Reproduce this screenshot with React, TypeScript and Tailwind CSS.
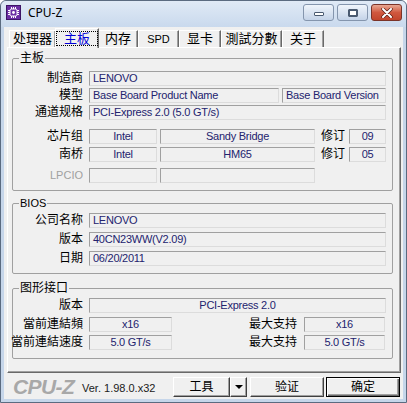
import type { ReactNode } from 'react';

const tabs = [
  { label: '处理器', w: 'w-[47px]' },
  { label: '主板', w: 'w-[44px]', active: true },
  { label: '内存', w: 'w-[40px]' },
  { label: 'SPD', w: 'w-[41px]' },
  { label: '显卡', w: 'w-[42px]' },
  { label: '測試分數', w: 'w-[61px]' },
  { label: '关于', w: 'w-[42px]' },
];

export default function App() {
  return (
    <div className="w-[407px] h-[403px] flex flex-col overflow-hidden rounded-t-[6px] border border-[#5b6b80] bg-[#c6d6ea] font-['Liberation_Sans','Noto_Sans_CJK_SC',sans-serif] text-black">
      <TitleBar />

      {/* client area */}
      <div className="mx-[3px] mb-[3px] flex-1 flex flex-col bg-[#f0f0f0]">
        {/* tabs */}
        <div className="mt-[1px] ml-[5px] h-[19px] flex items-end">
          {tabs.map((t) => (
            <div
              key={t.label}
              className={
                t.active
                  ? `${t.w} relative z-10 -mb-[1px] -mx-[1px] h-[20px] flex items-start justify-center pt-[2px] bg-[#f0f0f0] border-t border-l border-white border-r-[#696969] border-r shadow-[inset_-1px_0_0_#a0a0a0]`
                  : `${t.w} h-[17px] flex items-center justify-center border-t border-l border-white border-r border-r-[#696969] shadow-[inset_-1px_0_0_#a0a0a0]`
              }
            >
              {t.active ? (
                <span className="px-[7px] h-[15px] flex items-center border border-dotted border-black text-[13px] leading-[14px] text-[#0000d8]">
                  {t.label}
                </span>
              ) : (
                <span
                  className={
                    t.label === 'SPD'
                      ? 'text-[11px] leading-[14px]'
                      : 'text-[13px] leading-[14px]'
                  }
                >
                  {t.label}
                </span>
              )}
            </div>
          ))}
        </div>

        {/* tab panel */}
        <div className="ml-[3px] w-[394px] h-[326px] border border-t-white border-l-white border-b-[#696969] border-r-[#696969] shadow-[inset_-1px_-1px_0_#a0a0a0]">
          <Group title="主板" className="mt-[2px]">
            <div className="pt-[5px] pb-[7px]">
              <Row label="制造商">
                <Field className="w-[297px]">LENOVO</Field>
              </Row>
              <Row label="模型" className="mt-[2px]">
                <Field className="w-[190px]">Base Board Product Name</Field>
                <Field className="ml-[3px] w-[104px]">Base Board Version</Field>
              </Row>
              <Row label="通道规格" className="mt-[2px]">
                <Field className="w-[297px]">PCI-Express 2.0 (5.0 GT/s)</Field>
              </Row>
              <Row label="芯片组" className="mt-[9px]">
                <Field center className="w-[68px]">Intel</Field>
                <Field center className="ml-[3px] w-[155px]">Sandy Bridge</Field>
                <span className="ml-[6px] w-[24px] text-[12px] leading-[15px] whitespace-nowrap">修订</span>
                <Field center className="ml-[4px] w-[37px]">09</Field>
              </Row>
              <Row label="南桥" className="mt-[3px]">
                <Field center className="w-[68px]">Intel</Field>
                <Field center className="ml-[3px] w-[155px]">HM65</Field>
                <span className="ml-[6px] w-[24px] text-[12px] leading-[15px] whitespace-nowrap">修订</span>
                <Field center className="ml-[4px] w-[37px]">05</Field>
              </Row>
              <Row label="LPCIO" muted className="mt-[6px]">
                <Field className="w-[68px]" />
                <Field className="ml-[3px] w-[155px]" />
              </Row>
            </div>
          </Group>

          <Group title="BIOS" className="mt-[4px]" latinTitle>
            <div className="pt-[2px] pb-[7px]">
              <Row label="公司名称">
                <Field className="w-[297px]">LENOVO</Field>
              </Row>
              <Row label="版本" className="mt-[4px]">
                <Field className="w-[297px]">40CN23WW(V2.09)</Field>
              </Row>
              <Row label="日期" className="mt-[4px]">
                <Field className="w-[297px]">06/20/2011</Field>
              </Row>
            </div>
          </Group>

          <Group title="图形接口" className="mt-[6px]">
            <div className="pt-[2px] pb-[8px]">
              <Row label="版本">
                <Field center className="w-[297px]">PCI-Express 2.0</Field>
              </Row>
              <Row label="當前連結頻" className="mt-[4px]">
                <Field center className="w-[83px]">x16</Field>
                <span className="ml-auto text-[12px] leading-[15px] whitespace-nowrap">最大支持</span>
                <Field center className="ml-[7px] mr-[7px] w-[81px]">x16</Field>
              </Row>
              <Row label="當前連結速度" className="mt-[3px]">
                <Field center className="w-[83px]">5.0 GT/s</Field>
                <span className="ml-auto text-[12px] leading-[15px] whitespace-nowrap">最大支持</span>
                <Field center className="ml-[7px] mr-[7px] w-[81px]">5.0 GT/s</Field>
              </Row>
            </div>
          </Group>
        </div>

        {/* bottom bar */}
        <div className="flex-1 flex items-center pl-[9px] pr-[3px] pt-[1px]">
          <span className="w-[63px] text-[21px] leading-[22px] font-bold italic text-[#a8a8a8] tracking-[-0.6px]">
            CPU-Z
          </span>
          <span className="ml-[6px] text-[11px] leading-[13px] text-[#202020] pt-[3px]">Ver. 1.98.0.x32</span>
          <div className="ml-auto flex items-center">
            <div className="flex">
              <Button className="w-[57px]">工具</Button>
              <Button className="w-[17px]">
                <span className="block w-0 h-0 border-l-[4px] border-r-[4px] border-t-[4px] border-l-transparent border-r-transparent border-t-black" />
              </Button>
            </div>
            <Button className="ml-[3px] w-[74px]">验证</Button>
            <Button primary className="ml-[2px] w-[74px]">确定</Button>
          </div>
        </div>
      </div>
    </div>
  );
}

function TitleBar() {
  return (
    <div className="h-[26px] flex items-start bg-gradient-to-b from-[#e0eaf6] to-[#c9d9ed] rounded-t-[5px]">
      <div className="ml-[5px] mt-[4px]">
        <svg width="15" height="15" viewBox="0 0 15 15">
          <rect x="0.5" y="0.5" width="14" height="14" fill="#6b2ea3" stroke="#3d1566" />
          <g stroke="#fff" strokeWidth="1">
            <line x1="5.5" y1="2" x2="5.5" y2="4" />
            <line x1="7.5" y1="2" x2="7.5" y2="4" />
            <line x1="9.5" y1="2" x2="9.5" y2="4" />
            <line x1="5.5" y1="11" x2="5.5" y2="13" />
            <line x1="7.5" y1="11" x2="7.5" y2="13" />
            <line x1="9.5" y1="11" x2="9.5" y2="13" />
            <line x1="2" y1="5.5" x2="4" y2="5.5" />
            <line x1="2" y1="7.5" x2="4" y2="7.5" />
            <line x1="2" y1="9.5" x2="4" y2="9.5" />
            <line x1="11" y1="5.5" x2="13" y2="5.5" />
            <line x1="11" y1="7.5" x2="13" y2="7.5" />
            <line x1="11" y1="9.5" x2="13" y2="9.5" />
          </g>
          <rect x="4" y="4" width="7" height="7" rx="1.5" fill="none" stroke="#fff" />
          <circle cx="7.5" cy="7.5" r="1.4" fill="#fff" />
        </svg>
      </div>
      <span className="ml-[7px] mt-[4px] text-[12px] leading-[16px] font-['Noto_Sans',sans-serif] text-black">
        CPU-Z
      </span>
      <div className="ml-auto mr-[4px] mt-[3px] flex">
        <div className="w-[31px] h-[17px] flex items-end justify-center pb-[4px] rounded-[3px] border border-[#8495ad] bg-gradient-to-b from-[#f0f5fb] to-[#c4d3e8]">
          <span className="block w-[10px] h-[4px] rounded-[1px] border border-[#4a5a70] bg-white" />
        </div>
        <div className="ml-[3px] w-[31px] h-[17px] flex items-center justify-center rounded-[3px] border border-[#8495ad] bg-gradient-to-b from-[#f0f5fb] to-[#c4d3e8]">
          <span className="block w-[10px] h-[8px] rounded-[1px] border border-[#4a5a70] bg-white shadow-[inset_0_0_0_1px_#4a5a70] p-[1px]" />
        </div>
        <div className="ml-[3px] w-[31px] h-[17px] flex items-center justify-center rounded-[3px] border border-[#7a3328] bg-gradient-to-b from-[#e7a792] via-[#d0583f] to-[#c2452c]">
          <svg width="12" height="10" viewBox="0 0 12 10">
            <path d="M2 1 L10 9 M10 1 L2 9" stroke="#5a1e14" strokeWidth="3.4" strokeLinecap="round" />
            <path d="M2 1 L10 9 M10 1 L2 9" stroke="#fff" strokeWidth="2" strokeLinecap="round" />
          </svg>
        </div>
      </div>
    </div>
  );
}

function Group({
  title,
  className = '',
  latinTitle,
  children,
}: {
  title: string;
  className?: string;
  latinTitle?: boolean;
  children: ReactNode;
}) {
  return (
    <fieldset className={`ml-[4px] w-[381px] rounded-[2px] border border-[#a0a0a0] ${className}`}>
      <legend
        className={
          latinTitle
            ? 'ml-[6px] px-[1px] text-[11px] leading-[16px]'
            : 'ml-[6px] px-[1px] text-[12px] leading-[16px]'
        }
      >
        {title}
      </legend>
      {children}
    </fieldset>
  );
}

function Row({
  label,
  muted,
  className = '',
  children,
}: {
  label: string;
  muted?: boolean;
  className?: string;
  children?: ReactNode;
}) {
  return (
    <div className={`flex items-center ${className}`}>
      <div
        className={
          muted
            ? 'w-[70px] flex justify-end whitespace-nowrap text-[11px] leading-[15px] text-[#a0a0a0]'
            : 'w-[70px] flex justify-end whitespace-nowrap text-[12px] leading-[15px]'
        }
      >
        {label}
      </div>
      <div className="ml-[6px] flex flex-1 items-center">{children}</div>
    </div>
  );
}

function Field({
  className = '',
  center,
  children,
}: {
  className?: string;
  center?: boolean;
  children?: ReactNode;
}) {
  return (
    <div
      className={`h-[15px] overflow-hidden whitespace-nowrap border border-t-[#a0a0a0] border-l-[#a0a0a0] border-b-[#dcdcdc] border-r-[#dcdcdc] bg-[#f0f0f0] px-[3px] text-[11px] leading-[13px] tracking-[-0.25px] text-[#23236e] ${
        center ? 'text-center' : ''
      } ${className}`}
    >
      {children}
    </div>
  );
}

function Button({
  className = '',
  primary,
  children,
}: {
  className?: string;
  primary?: boolean;
  children: ReactNode;
}) {
  return (
    <div
      className={
        primary
          ? `${className} h-[20px] flex items-center justify-center border border-black bg-[#f0f0f0] shadow-[inset_1px_1px_0_#fff,inset_-1px_-1px_0_#696969,inset_-2px_-2px_0_#a0a0a0] text-[12px] leading-[14px]`
          : `${className} h-[20px] flex items-center justify-center border border-t-white border-l-white border-b-[#404040] border-r-[#404040] bg-[#f0f0f0] shadow-[inset_-1px_-1px_0_#a0a0a0] text-[12px] leading-[14px]`
      }
    >
      {children}
    </div>
  );
}
